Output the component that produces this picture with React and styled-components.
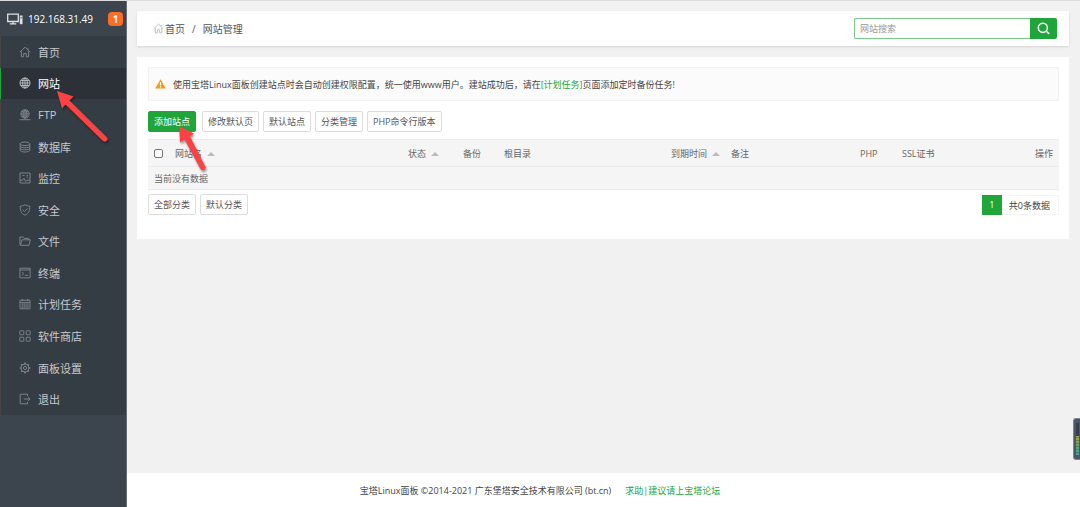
import React from 'react';
import styled, { createGlobalStyle } from 'styled-components';

const GlobalStyle = createGlobalStyle`
  * {
    box-sizing: border-box;
  }
  body {
    margin: 0;
    background: #f1f1f1;
    color: #555;
    font-family: 'Open Sans', 'Noto Sans CJK SC', sans-serif;
    font-size: 9px;
  }
  button,
  input {
    font-family: inherit;
    font-size: inherit;
  }
  a {
    color: inherit;
    text-decoration: none;
  }
`;

const Layout = styled.div`
  display: flex;
  min-height: 100vh;
  border-top: 1px solid #dcdcdc;
`;

const Sidebar = styled.aside`
  flex: 0 0 127px;
  background: #3c444d;
  border-right: 1px solid #6a6f76;
`;

const Server = styled.div`
  display: flex;
  align-items: center;
  height: 35px;
  padding: 0 3px 0 7px;
  color: #fff;
  font-size: 10px;
  svg {
    margin-right: 5px;
  }
`;

const Count = styled.span`
  margin-left: auto;
  width: 15px;
  height: 14px;
  border-radius: 4px;
  background: #fc6d26;
  font-weight: 700;
  line-height: 14px;
  text-align: center;
`;

const Menu = styled.ul`
  display: grid;
  grid-auto-rows: 1fr;
  height: 379px;
  margin: 0;
  padding: 0;
  list-style: none;
  background: #353d44;
`;

const MenuItem = styled.li`
  position: relative;
  display: flex;
  border-left: 1px solid ${props => (props.$active ? '#20a53a' : '#4a4343')};
  background: ${props => (props.$active ? '#2c3138' : 'transparent')};
  color: ${props => (props.$active ? '#fff' : '#c6cacd')};
  a {
    flex: 1;
    display: flex;
    align-items: center;
    gap: 7px;
    padding-left: 18px;
    font-size: 11px;
  }
  a > svg {
    color: ${props => (props.$active ? '#b4b7ba' : '#7b8287')};
  }
`;

const Main = styled.div`
  flex: 1;
  min-width: 0;
  display: flex;
  flex-direction: column;
`;

const Content = styled.main`
  flex: 1;
  padding: 10px 11px 10px 10px;
`;

const TopBar = styled.header`
  display: flex;
  align-items: center;
  justify-content: space-between;
  height: 35px;
  margin-bottom: 11px;
  padding: 0 12px 0 16px;
  background: #fff;
  box-shadow: 0 1px 2px rgba(0, 0, 0, 0.12);
`;

const Crumbs = styled.nav`
  display: flex;
  align-items: center;
  font-size: 10px;
  svg {
    margin-right: 1px;
    color: #bbb;
  }
`;

const Slash = styled.span`
  padding: 0 7px;
`;

const Search = styled.form`
  display: flex;
  height: 21px;
`;

const SearchInput = styled.input`
  width: 176px;
  padding: 0 5px;
  border: 1px solid #79c989;
  border-right: 0;
  border-radius: 2px 0 0 2px;
  outline: 0;
  &::placeholder {
    color: #999;
  }
`;

const SearchButton = styled.button`
  display: flex;
  align-items: center;
  justify-content: center;
  width: 27px;
  padding: 0;
  border: 0;
  border-radius: 0 2px 2px 0;
  background: #20a53a;
  color: #fff;
`;

const Panel = styled.section`
  min-height: 182px;
  padding: 10px 10px 23px 11px;
  background: #fff;
`;

const Notice = styled.div`
  display: flex;
  align-items: center;
  gap: 7px;
  height: 34px;
  padding: 0 6px;
  border: 1px solid #f1f1f1;
  background: #fbfbfb;
  color: #444;
`;

const GreenLink = styled.a`
  color: #20a53a;
`;

const Toolbar = styled.div`
  display: flex;
  gap: 4px;
  margin: 10px 0 7px;
`;

const Button = styled.button`
  position: relative;
  height: 21px;
  margin: 0;
  margin-right: ${props => (props.$primary ? '2px' : '0')};
  padding: 0 5px;
  border: 1px solid ${props => (props.$primary ? '#20a53a' : '#dcdcdc')};
  border-radius: 2px;
  background: ${props => (props.$primary ? '#20a53a' : '#fff')};
  color: ${props => (props.$primary ? '#fff' : '#555')};
  line-height: 18px;
  white-space: nowrap;
`;

const Table = styled.table`
  width: 100%;
  table-layout: fixed;
  border-collapse: collapse;
  background: #f5f5f5;
  color: #666;
  tr {
    border-top: 1px solid #ebebeb;
    border-bottom: 1px solid #ebebeb;
  }
  th,
  td {
    height: 23px;
    padding: 0 0 0 6px;
    font-weight: 400;
    text-align: left;
    white-space: nowrap;
  }
  th {
    height: 27px;
  }
  th:last-child {
    padding-right: 6px;
    text-align: right;
  }
  input {
    display: block;
    width: 9px;
    height: 9px;
    margin: 0;
    appearance: none;
    border: 1px solid #777;
    border-radius: 2px;
    background: #fff;
  }
`;

const Sort = styled.span`
  display: inline-block;
  margin-left: 5px;
  border: 4px solid transparent;
  border-top: 0;
  border-bottom-color: #bbb;
  vertical-align: 1px;
`;

const Bottom = styled.div`
  display: flex;
  justify-content: space-between;
  margin-top: 4px;
`;

const Group = styled.div`
  display: flex;
  gap: 4px;
`;

const Pager = styled.div`
  display: flex;
  height: 20px;
  margin-top: 1px;
  line-height: 20px;
`;

const Page = styled.span`
  width: 20px;
  background: #20a53a;
  color: #fff;
  text-align: center;
`;

const Total = styled.span`
  padding: 0 8px 0 7px;
  border: 1px solid #f5f5f5;
  border-left: 0;
  color: #444;
  line-height: 19px;
`;

const Footer = styled.footer`
  display: flex;
  align-items: center;
  justify-content: center;
  gap: 14px;
  height: 34px;
  padding-right: 127px;
  background: #fff;
  color: #444;
`;

const Meter = styled.div`
  position: fixed;
  top: 418px;
  right: 0;
  width: 7px;
  height: 42px;
  padding: 4px 1px 4px 2px;
  border: 1px solid #7c8490;
  border-right: 0;
  border-radius: 3px 0 0 3px;
  background: #4d5666;
  div {
    height: 100%;
    background:
      repeating-linear-gradient(transparent 0 2px, rgba(60, 70, 85, 0.4) 2px 3px),
      linear-gradient(#363d4c 0 42%, #a9a63e 42%, #77a05c 65%, #35ab94);
  }
`;

const Pointer = styled.svg`
  position: absolute;
  z-index: 2;
  top: ${props => props.$top};
  left: ${props => props.$left};
  overflow: visible;
  pointer-events: none;
  filter: drop-shadow(1px 2px 1px rgba(0, 0, 0, 0.4));
`;

const Icon = ({ size = 12, children }) => (
  <svg
    width={size}
    height={size}
    viewBox="0 0 12 12"
    fill="none"
    stroke="currentColor"
    strokeWidth="1"
    aria-hidden="true"
  >
    {children}
  </svg>
);

const home = (
  <path d="M.8 6.2 6 1.2l5.2 5M2.4 5.2v5.6h2.3V7.4h2.6v3.4h2.3V5.2M9 3.7V1.8" />
);

const menu = [
  { name: '首页', icon: home },
  {
    name: '网站',
    active: true,
    icon: (
      <>
        <circle cx="6" cy="6" r="5" />
        <ellipse cx="6" cy="6" rx="2.3" ry="5" />
        <path d="M1 6h10M6 1v10M1.8 3.5h8.4M1.8 8.5h8.4" />
      </>
    )
  },
  {
    name: 'FTP',
    icon: (
      <>
        <circle cx="6" cy="4.9" r="4.1" />
        <ellipse cx="6" cy="4.9" rx="1.9" ry="4.1" />
        <path d="M2 4.9h8M2.6 2.8h6.8M2.6 7h6.8M6 .8v9.4M.6 10.7h10.8" />
      </>
    )
  },
  {
    name: '数据库',
    icon: (
      <>
        <ellipse cx="6" cy="2.8" rx="4.8" ry="1.8" />
        <path d="M1.2 2.8v6.4c0 2.4 9.6 2.4 9.6 0V2.8M1.2 5c0 2.3 9.6 2.3 9.6 0M1.2 7.1c0 2.3 9.6 2.3 9.6 0" />
      </>
    )
  },
  {
    name: '监控',
    icon: (
      <path d="M1 1h10v10H1zM1 8.2h2.6l1.2-2 1.8 3.2 1.3-1.2H11M3.5 3.4h2M7.5 3.4h1.6M7.5 5.2h1.6" />
    )
  },
  {
    name: '安全',
    icon: (
      <path d="M6 .7C4.6 1.8 3 2.1 1.2 2.1c0 4.6.8 7.3 4.8 9.2 4-1.9 4.8-4.6 4.8-9.2C9 2.1 7.4 1.8 6 .7ZM3.6 5.7l1.9 1.9 3.2-3.3" />
    )
  },
  {
    name: '文件',
    icon: (
      <path d="M1.9 10.3 .9 9.6V2h3.4l1.2 1.4h4.3v1.4M1.5 10.3l1.4-5.5h8.4l-1.4 5.5z" />
    )
  },
  {
    name: '终端',
    icon: <path d="M.9 1.2h10.2v9.6H.9zM.9 3h10.2M3 5l1.8 1.6L3 8.2M6 8.3h3" />
  },
  {
    name: '计划任务',
    icon: (
      <path d="M1 2.2h10v8.6H1zM1 4.4h10M3.4 1v2M8.6 1v2M3.2 5.2v5M5.1 5.2v5M7 5.2v5M8.9 5.2v5" />
    )
  },
  {
    name: '软件商店',
    icon: (
      <>
        <rect x=".8" y=".8" width="4" height="4" rx=".6" />
        <rect x="7.2" y=".8" width="4" height="4" rx=".6" />
        <rect x=".8" y="7.2" width="4" height="4" rx=".6" />
        <rect x="7.2" y="7.2" width="4" height="4" rx=".6" />
      </>
    )
  },
  {
    name: '面板设置',
    icon: (
      <>
        <circle cx="6" cy="6" r="4" />
        <circle cx="6" cy="6" r="1.6" />
        <path
          d="M6 .6v1.600M6 9.800v1.600M.6 6h1.600M9.800 6h1.600M2.200 2.200l1.100 1.100M8.700 8.700l1.100 1.100M2.200 9.800l1.100-1.100M8.700 3.300l1.100-1.100"
          strokeWidth="1.600"
        />
      </>
    )
  },
  {
    name: '退出',
    icon: <path d="M8.5 3.2v-2H1.2v9.6h7.3v-2M4.8 6H11M9.2 4.2 11 6 9.2 7.8" />
  }
];

const columns = [21, 233, 55, 41, 167, 60, 129, 42, 63, 100];

const App = () => {
  return (
    <>
      <GlobalStyle />
      <Layout>
        <Sidebar>
          <Server>
            <svg width="16" height="12" viewBox="0 0 16 12" fill="none" stroke="#dfe2e4">
              <path d="M.7 1.2h10.6v7.3H.7zM6 8.5v2M2.8 10.8h6.4" strokeWidth="1.3" />
              <path d="M12.800 2.500h2.700v8.700h-2.700z" fill="#dfe2e4" stroke="none" />
              <path d="M14.100 4v1.500" stroke="#3c444d" />
            </svg>
            192.168.31.49
            <Count>1</Count>
          </Server>
          <Menu>
            {menu.map(item => (
              <MenuItem key={item.name} $active={item.active}>
                <a href="#">
                  <Icon>{item.icon}</Icon>
                  {item.name}
                </a>
                {item.active && (
                  <Pointer $top="22px" $left="55px" width="54" height="54" viewBox="0 0 54 54">
                    <path
                      d="M1 1 17.5 6.5 13.5 10.5 50.5 47A2.5 2.5 0 0 1 47 51L9.500 14.500 6 18.500Z"
                      fill="#fb4343"
                    />
                  </Pointer>
                )}
              </MenuItem>
            ))}
          </Menu>
        </Sidebar>
        <Main>
          <Content>
            <TopBar>
              <Crumbs>
                <Icon size={11}>{home}</Icon>
                <a href="#">首页</a>
                <Slash>/</Slash>
                <span>网站管理</span>
              </Crumbs>
              <Search>
                <SearchInput placeholder="网站搜索" aria-label="网站搜索" />
                <SearchButton type="button" aria-label="搜索">
                  <Icon size={13}>
                    <circle cx="5.4" cy="5.4" r="4.2" strokeWidth="1.4" />
                    <path d="m8.500 8.500 2.800 2.500" strokeWidth="1.4" />
                  </Icon>
                </SearchButton>
              </Search>
            </TopBar>
            <Panel>
              <Notice>
                <svg width="11" height="10" viewBox="0 0 11 10" aria-hidden="true">
                  <path d="M5.5.3 10.8 9.5H.2z" fill="#f49a1c" />
                  <path d="M5.5 3.3v3M5.5 7.2v1.2" stroke="#fff" strokeWidth="1.2" />
                </svg>
                <span>
                  使用宝塔Linux面板创建站点时会自动创建权限配置，统一使用www用户。建站成功后，请在
                  <GreenLink href="#">[计划任务]</GreenLink>
                  页面添加定时备份任务!
                </span>
              </Notice>
              <Toolbar>
                <Button $primary>
                  添加站点
                  <Pointer $top="13px" $left="29px" width="28" height="46" viewBox="0 0 28 46">
                    <path
                      d="M1 1 16 8.500 12 11.500 27 41A2.600 2.600 0 0 1 22.500 44L6.500 14.500 2 17.500Z"
                      fill="#fb4343"
                    />
                  </Pointer>
                </Button>
                <Button>修改默认页</Button>
                <Button>默认站点</Button>
                <Button>分类管理</Button>
                <Button>PHP命令行版本</Button>
              </Toolbar>
              <Table>
                <colgroup>
                  {columns.map((width, index) => (
                    <col key={index} style={{ width }} />
                  ))}
                </colgroup>
                <thead>
                  <tr>
                    <th>
                      <input type="checkbox" aria-label="全选" />
                    </th>
                    <th>
                      网站名
                      <Sort />
                    </th>
                    <th>
                      状态
                      <Sort />
                    </th>
                    <th>备份</th>
                    <th>根目录</th>
                    <th>
                      到期时间
                      <Sort />
                    </th>
                    <th>备注</th>
                    <th>PHP</th>
                    <th>SSL证书</th>
                    <th>操作</th>
                  </tr>
                </thead>
                <tbody>
                  <tr>
                    <td colSpan="10">当前没有数据</td>
                  </tr>
                </tbody>
              </Table>
              <Bottom>
                <Group>
                  <Button>全部分类</Button>
                  <Button>默认分类</Button>
                </Group>
                <Pager>
                  <Page>1</Page>
                  <Total>共0条数据</Total>
                </Pager>
              </Bottom>
            </Panel>
          </Content>
          <Footer>
            <span>宝塔Linux面板 ©2014-2021 广东堡塔安全技术有限公司 (bt.cn)</span>
            <GreenLink href="#">求助|建议请上宝塔论坛</GreenLink>
          </Footer>
        </Main>
      </Layout>
      <Meter>
        <div />
      </Meter>
    </>
  );
};

export default App;
